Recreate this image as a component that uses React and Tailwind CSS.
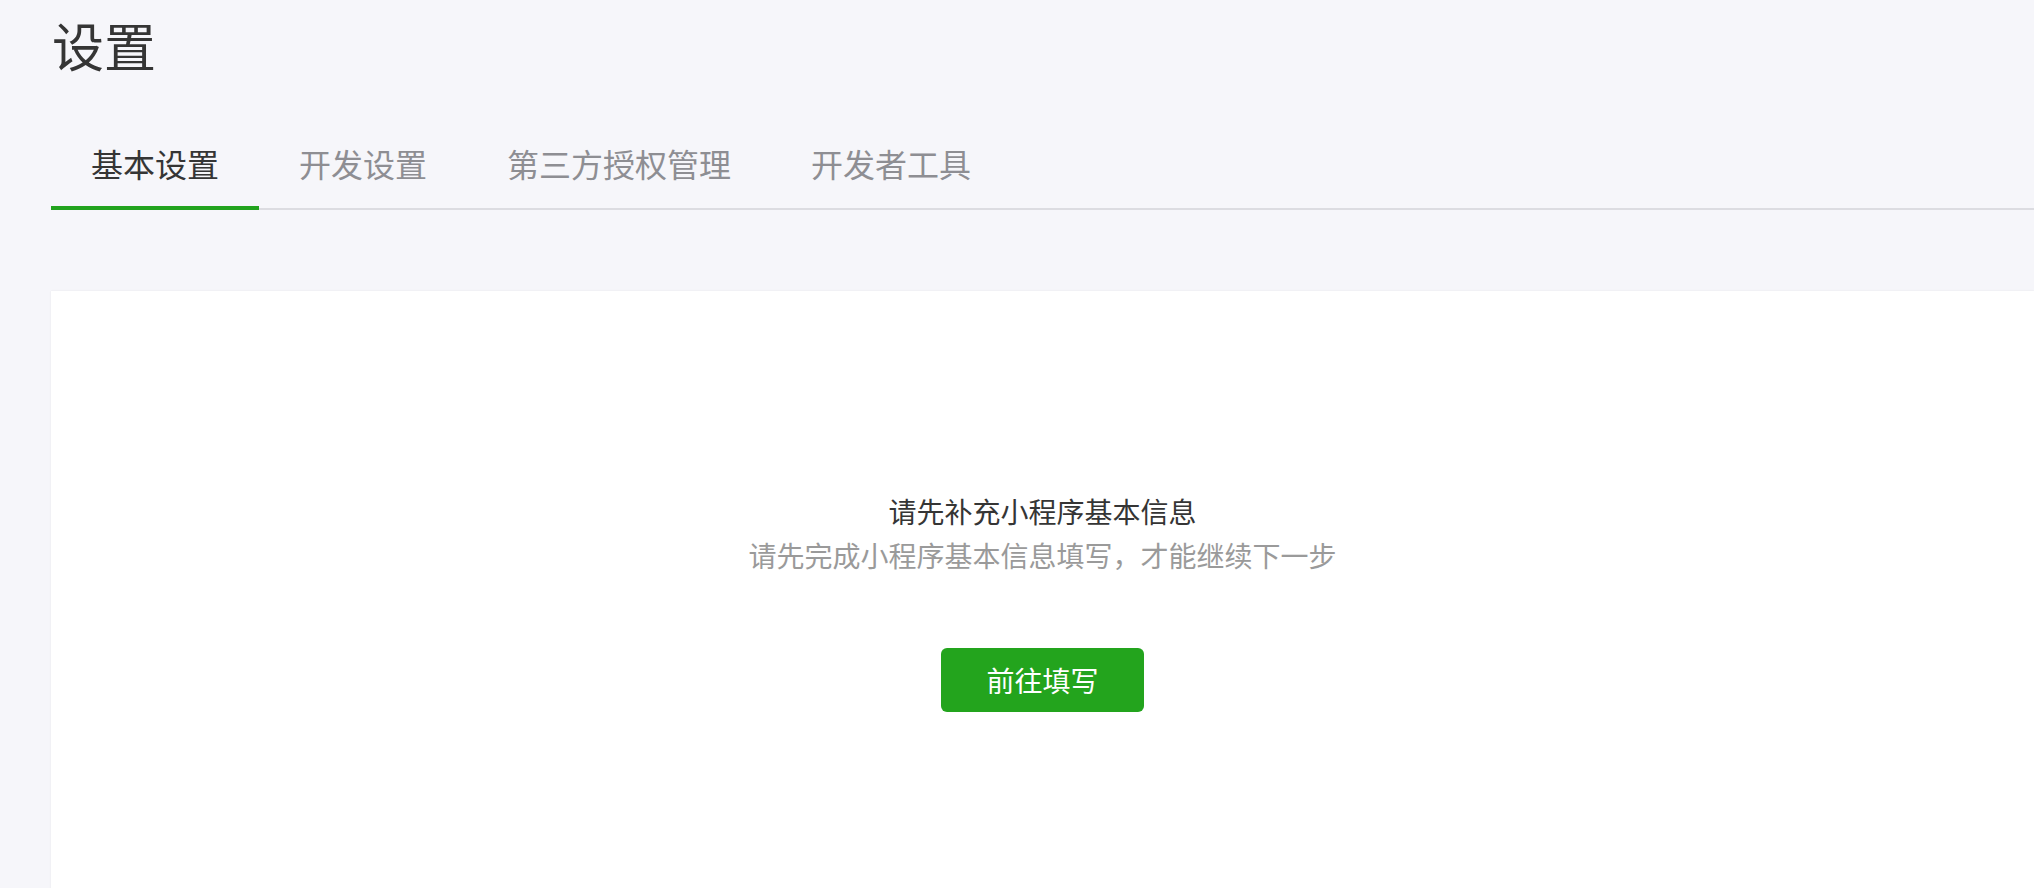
// Settings page — empty state for 基本设置
const tabs = ['基本设置', '开发设置', '第三方授权管理', '开发者工具']

export default function App() {
  return (
    <div
      className="min-h-screen bg-[#f6f6fa] pl-[51px] flex flex-col overflow-hidden"
      style={{ fontFamily: '"Noto Sans CJK SC", "Noto Sans", sans-serif' }}
    >
      <h1 className="pt-[9px] pl-[1px] text-[52px] leading-[72px] font-normal text-[#353535]">设置</h1>

      <div className="mt-[60px] flex border-b-2 border-[#dcdce1]">
        {tabs.map((t, i) => (
          <div
            key={t}
            className={
              i === 0
                ? 'px-[40px] pb-[21px] -mb-[2px] border-b-4 border-[#22a31e] text-[32px] leading-[44px] text-[#353535]'
                : 'px-[40px] pb-[21px] -mb-[2px] border-b-4 border-transparent text-[32px] leading-[44px] text-[#8e8e93]'
            }
          >
            {t}
          </div>
        ))}
      </div>

      <div className="mt-[81px] flex-1 min-h-[620px] bg-white shadow-[0_0_2px_rgba(0,0,0,0.07)] flex flex-col items-center pt-[198px]">
        <p className="text-[28px] leading-[44px] text-[#353535]">请先补充小程序基本信息</p>
        <p className="text-[28px] leading-[44px] text-[#9a9a9a]">请先完成小程序基本信息填写，才能继续下一步</p>
        <button className="mt-[71px] w-[203px] h-[64px] rounded-[6px] bg-[#23a41d] text-white text-[28px] leading-none">
          前往填写
        </button>
      </div>
    </div>
  )
}
